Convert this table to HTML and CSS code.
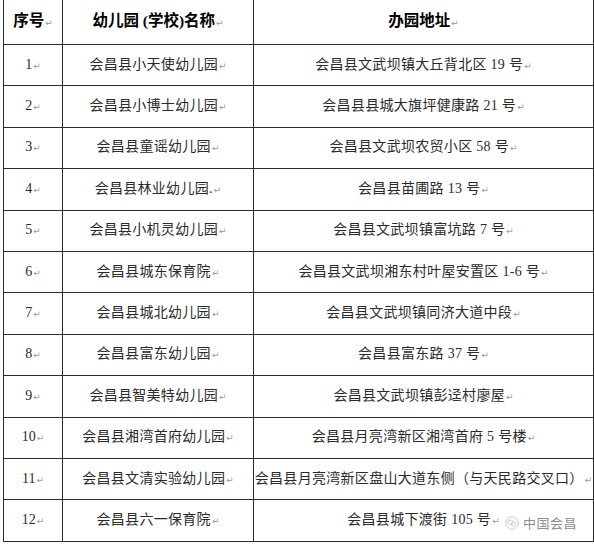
FILE: index.html
```html
<!DOCTYPE html>
<html lang="zh-CN">
<head>
<meta charset="utf-8">
<title>会昌县幼儿园名单</title>
<link rel="stylesheet" href="styles.css">
</head>
<body>
<div class="sheet">
<table class="kg">
  <colgroup><col class="col-no"><col class="col-name"><col class="col-addr"></colgroup>
  <thead>
    <tr><th>序号<span class="pm">↵</span></th><th>幼儿园 (学校)名称<span class="pm">↵</span></th><th>办园地址<span class="pm">↵</span></th></tr>
  </thead>
  <tbody>
    <tr><td class="no">1<span class="pm">↵</span></td><td>会昌县小天使幼儿园<span class="pm">↵</span></td><td>会昌县文武坝镇大丘背北区 19 号<span class="pm">↵</span></td></tr>
    <tr><td class="no">2<span class="pm">↵</span></td><td>会昌县小博士幼儿园<span class="pm">↵</span></td><td>会昌县县城大旗坪健康路 21 号<span class="pm">↵</span></td></tr>
    <tr><td class="no">3<span class="pm">↵</span></td><td>会昌县童谣幼儿园<span class="pm">↵</span></td><td>会昌县文武坝农贸小区 58 号<span class="pm">↵</span></td></tr>
    <tr><td class="no">4<span class="pm">↵</span></td><td>会昌县林业幼儿园.<span class="pm">↵</span></td><td>会昌县苗圃路 13 号<span class="pm">↵</span></td></tr>
    <tr><td class="no">5<span class="pm">↵</span></td><td>会昌县小机灵幼儿园<span class="pm">↵</span></td><td>会昌县文武坝镇富坑路 7 号<span class="pm">↵</span></td></tr>
    <tr><td class="no">6<span class="pm">↵</span></td><td>会昌县城东保育院<span class="pm">↵</span></td><td>会昌县文武坝湘东村叶屋安置区 1-6 号<span class="pm">↵</span></td></tr>
    <tr><td class="no">7<span class="pm">↵</span></td><td>会昌县城北幼儿园<span class="pm">↵</span></td><td>会昌县文武坝镇同济大道中段<span class="pm">↵</span></td></tr>
    <tr><td class="no">8<span class="pm">↵</span></td><td>会昌县富东幼儿园<span class="pm">↵</span></td><td>会昌县富东路 37 号<span class="pm">↵</span></td></tr>
    <tr><td class="no">9<span class="pm">↵</span></td><td>会昌县智美特幼儿园<span class="pm">↵</span></td><td>会昌县文武坝镇彭迳村廖屋<span class="pm">↵</span></td></tr>
    <tr><td class="no">10<span class="pm">↵</span></td><td>会昌县湘湾首府幼儿园<span class="pm">↵</span></td><td>会昌县月亮湾新区湘湾首府 5 号楼<span class="pm">↵</span></td></tr>
    <tr><td class="no">11<span class="pm">↵</span></td><td>会昌县文清实验幼儿园<span class="pm">↵</span></td><td>会昌县月亮湾新区盘山大道东侧（与天民路交叉口）<span class="pm">↵</span></td></tr>
    <tr><td class="no">12<span class="pm">↵</span></td><td>会昌县六一保育院<span class="pm">↵</span></td><td>会昌县城下渡街 105 号<span class="pm">↵</span></td></tr>
  </tbody>
</table>
<div class="watermark">
  <svg class="wm-icon" width="14" height="14" viewBox="0 0 14 14"><circle cx="7" cy="7" r="6.2" fill="none" stroke="#c8c8c8" stroke-width="1"/><ellipse cx="5.6" cy="6.2" rx="2.6" ry="2.1" fill="none" stroke="#c8c8c8" stroke-width="0.9"/><ellipse cx="8.6" cy="8.2" rx="2.2" ry="1.8" fill="none" stroke="#c8c8c8" stroke-width="0.9"/></svg>
  <span class="wm-text">中国会昌</span>
</div>
</div>
</body>
</html>
```

FILE: styles.css
```css
html, body {
  margin: 0;
  padding: 0;
  background: #ffffff;
}

body {
  font-family: "Liberation Serif", "Noto Sans CJK SC", serif;
  color: #2a2a2a;
}

.sheet {
  position: relative;
  padding-left: 3px;
  width: 591px;
}

.kg {
  border-collapse: collapse;
  table-layout: fixed;
  width: 590px;
}

.col-no { width: 59px; }
.col-name { width: 191px; }
.col-addr { width: 340px; }

.kg th,
.kg td {
  border: 1px solid #2b2b2b;
  padding: 0;
  text-align: center;
  white-space: nowrap;
  font-size: 14px;
  line-height: 18px;
  letter-spacing: 0.3px;
  overflow: visible;
}

.kg thead th {
  border-top: none;
  height: 44px;
  font-weight: 700;
  font-size: 15.5px;
  letter-spacing: 0;
  color: #000;
}

.kg tbody td {
  height: 40.4px;
}

.kg td.no {
  font-family: "Liberation Serif", serif;
  font-size: 14px;
  letter-spacing: 0;
}

.pm {
  font-family: "DejaVu Sans", sans-serif;
  font-size: 9px;
  font-weight: 400;
  color: #9a9a9a;
  margin-left: 1px;
  letter-spacing: 0;
  vertical-align: 0;
}

.watermark {
  position: absolute;
  left: 503px;
  top: 515px;
  display: flex;
  align-items: center;
  gap: 4px;
  padding: 0 2px;
  background: rgba(255, 255, 255, 0.55);
}

.wm-icon {
  display: block;
}

.wm-text {
  font-family: "Noto Sans CJK SC", sans-serif;
  font-size: 13px;
  line-height: 16px;
  color: #8e8e8e;
  letter-spacing: 0.5px;
}
```
